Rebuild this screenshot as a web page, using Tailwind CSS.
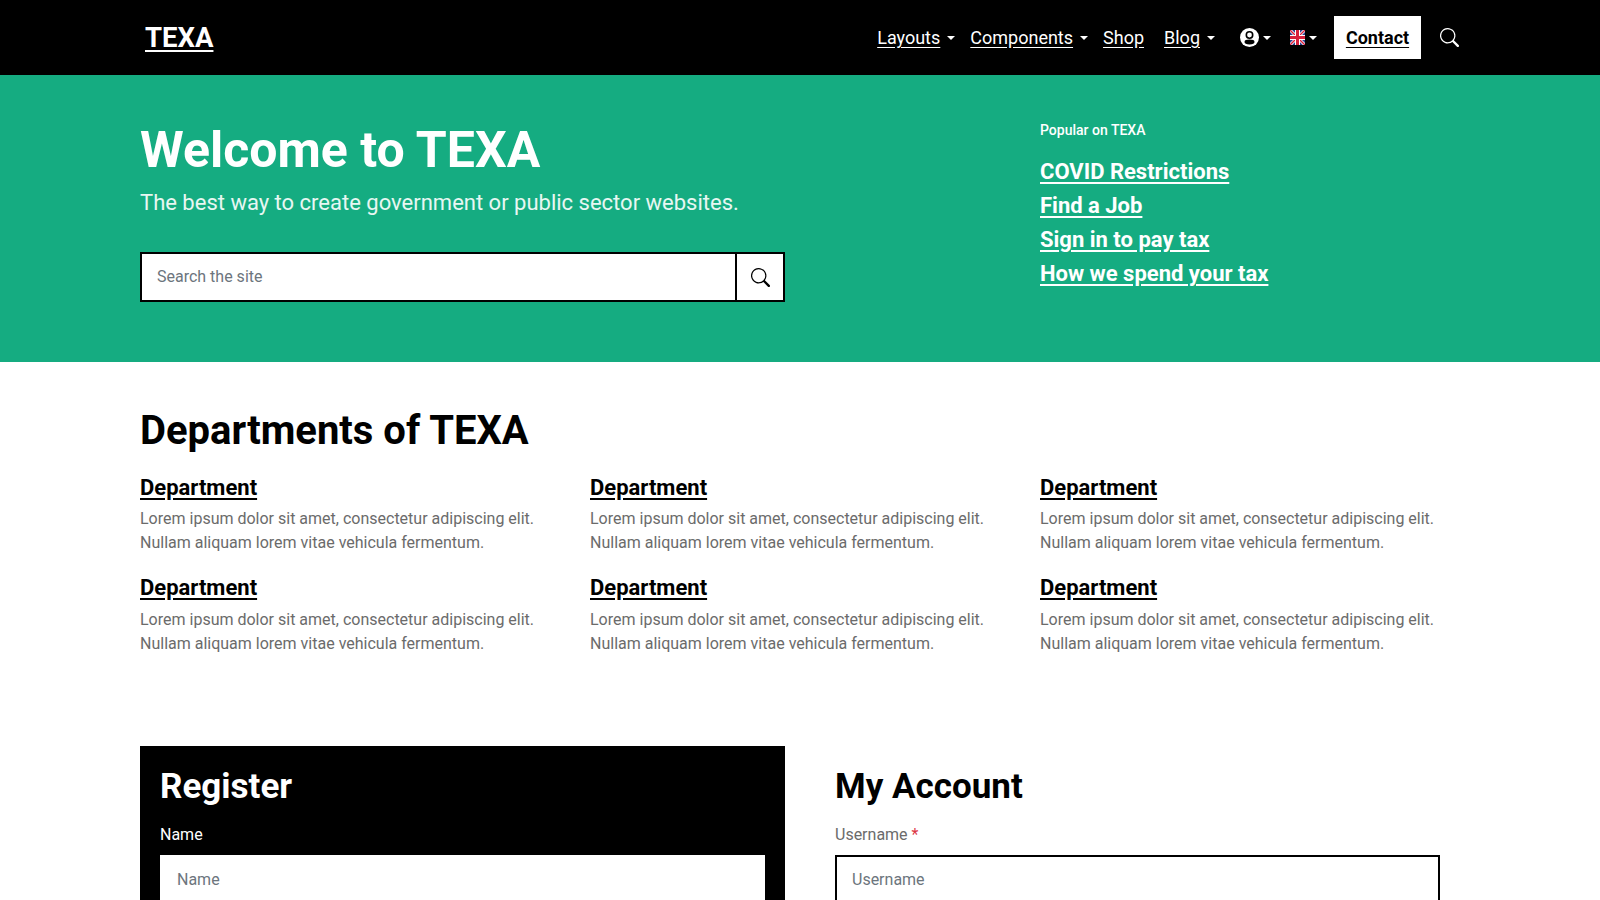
<!doctype html>
<html lang="en">
<head>
<meta charset="utf-8">
<title>TEXA</title>
<script src="https://cdn.jsdelivr.net/npm/@tailwindcss/browser@4"></script>
</head>
<body class="h-[900px] overflow-hidden bg-white font-['Roboto',sans-serif] text-[16px] text-[#6b6b6b]">
<header class="h-[75px] bg-black text-white">
  <div class="ml-[140px] flex h-full w-[1320px] items-center pl-[5px] pr-[1px]">
    <a href="#" class="text-[27.5px] font-bold underline underline-offset-[3px]">TEXA</a>
    <nav class="ml-auto flex items-center text-[18px]">
      <a href="#" class="underline underline-offset-[3px]">Layouts</a>
      <span class="ml-[7px] h-0 w-0 border-x-[4px] border-t-[4px] border-x-transparent border-t-white"></span>
      <a href="#" class="ml-[15px] underline underline-offset-[3px]">Components</a>
      <span class="ml-[7px] h-0 w-0 border-x-[4px] border-t-[4px] border-x-transparent border-t-white"></span>
      <a href="#" class="ml-[15px] underline underline-offset-[3px]">Shop</a>
      <a href="#" class="ml-[20px] underline underline-offset-[3px]">Blog</a>
      <span class="ml-[7px] h-0 w-0 border-x-[4px] border-t-[4px] border-x-transparent border-t-white"></span>
      <svg class="ml-[25px]" width="19" height="19" viewBox="0 0 19 19"><circle cx="9.5" cy="9.5" r="9.5" fill="#fff"/><circle cx="9.5" cy="7" r="3.2" fill="#fff" stroke="#000" stroke-width="1.6"/><ellipse cx="9.5" cy="14" rx="5" ry="2.4" fill="#000"/></svg>
      <span class="ml-[4px] h-0 w-0 border-x-[4px] border-t-[4px] border-x-transparent border-t-white"></span>
      <svg class="ml-[19px]" width="15" height="15" viewBox="0 0 15 15"><rect width="15" height="15" fill="#2a3f8f"/><path d="M0 0L15 15M15 0L0 15" stroke="#fff" stroke-width="3"/><path d="M0 0L15 15M15 0L0 15" stroke="#d8203c" stroke-width="1.4"/><path d="M7.5 0V15M0 7.5H15" stroke="#fff" stroke-width="5"/><path d="M7.5 0V15M0 7.5H15" stroke="#d8203c" stroke-width="3"/></svg>
      <span class="ml-[4px] h-0 w-0 border-x-[4px] border-t-[4px] border-x-transparent border-t-white"></span>
      <a href="#" class="ml-[17px] flex h-[43px] w-[87px] items-center justify-center bg-white font-bold text-black underline underline-offset-[3px]">Contact</a>
      <svg class="ml-[19px]" width="19" height="19" viewBox="0 0 16 16" fill="#fff"><path d="M11.742 10.344a6.5 6.5 0 1 0-1.397 1.398h-.001c.03.04.062.078.098.115l3.85 3.85a1 1 0 0 0 1.415-1.414l-3.85-3.85a1.007 1.007 0 0 0-.115-.1zM12 6.5a5.5 5.5 0 1 1-11 0 5.5 5.5 0 0 1 11 0z"/></svg>
    </nav>
  </div>
</header>

<section class="h-[287px] bg-[#15ac81] text-white">
  <div class="ml-[140px] flex w-[1300px] pt-[45px]">
    <div class="w-[900px]">
      <h1 class="text-[50px] font-bold leading-[60px]">Welcome to TEXA</h1>
      <p class="mt-[6px] text-[22px] leading-[33px] text-white/90">The best way to create government or public sector websites.</p>
      <div class="mt-[33px] flex h-[50px] w-[645px] border-2 border-black bg-white">
        <div class="flex flex-1 items-center pl-[15px] text-[#6c757d]">Search the site</div>
        <div class="flex w-[48px] items-center justify-center border-l-2 border-black">
          <svg width="19" height="19" viewBox="0 0 16 16" fill="#000"><path d="M11.742 10.344a6.5 6.5 0 1 0-1.397 1.398h-.001c.03.04.062.078.098.115l3.85 3.85a1 1 0 0 0 1.415-1.414l-3.85-3.85a1.007 1.007 0 0 0-.115-.1zM12 6.5a5.5 5.5 0 1 1-11 0 5.5 5.5 0 0 1 11 0z"/></svg>
        </div>
      </div>
    </div>
    <div class="w-[400px]">
      <p class="text-[14px] font-medium leading-[21px]">Popular on TEXA</p>
      <ul class="mt-[14px] text-[22px] font-bold leading-[34px]">
        <li><a href="#" class="underline underline-offset-[3px]">COVID Restrictions</a></li>
        <li><a href="#" class="underline underline-offset-[3px]">Find a Job</a></li>
        <li><a href="#" class="underline underline-offset-[3px]">Sign in to pay tax</a></li>
        <li><a href="#" class="underline underline-offset-[3px]">How we spend your tax</a></li>
      </ul>
    </div>
  </div>
</section>

<main class="ml-[140px] w-[1300px]">
  <h2 class="mt-[45px] text-[40px] font-bold leading-[48px] text-black">Departments of TEXA</h2>
  <div class="mt-[20px] grid grid-cols-[450px_450px_400px] gap-y-[20px]">
    <article>
      <h3 class="text-[22px] font-bold leading-[26px] text-black"><a href="#" class="underline underline-offset-[3px]">Department</a></h3>
      <p class="mt-[6px] w-[400px] leading-[24px]">Lorem ipsum dolor sit amet, consectetur adipiscing elit. Nullam aliquam lorem vitae vehicula fermentum.</p>
    </article>
    <article>
      <h3 class="text-[22px] font-bold leading-[26px] text-black"><a href="#" class="underline underline-offset-[3px]">Department</a></h3>
      <p class="mt-[6px] w-[400px] leading-[24px]">Lorem ipsum dolor sit amet, consectetur adipiscing elit. Nullam aliquam lorem vitae vehicula fermentum.</p>
    </article>
    <article>
      <h3 class="text-[22px] font-bold leading-[26px] text-black"><a href="#" class="underline underline-offset-[3px]">Department</a></h3>
      <p class="mt-[6px] w-[400px] leading-[24px]">Lorem ipsum dolor sit amet, consectetur adipiscing elit. Nullam aliquam lorem vitae vehicula fermentum.</p>
    </article>
    <article>
      <h3 class="text-[22px] font-bold leading-[26px] text-black"><a href="#" class="underline underline-offset-[3px]">Department</a></h3>
      <p class="mt-[7px] w-[400px] leading-[24px]">Lorem ipsum dolor sit amet, consectetur adipiscing elit. Nullam aliquam lorem vitae vehicula fermentum.</p>
    </article>
    <article>
      <h3 class="text-[22px] font-bold leading-[26px] text-black"><a href="#" class="underline underline-offset-[3px]">Department</a></h3>
      <p class="mt-[7px] w-[400px] leading-[24px]">Lorem ipsum dolor sit amet, consectetur adipiscing elit. Nullam aliquam lorem vitae vehicula fermentum.</p>
    </article>
    <article>
      <h3 class="text-[22px] font-bold leading-[26px] text-black"><a href="#" class="underline underline-offset-[3px]">Department</a></h3>
      <p class="mt-[7px] w-[400px] leading-[24px]">Lorem ipsum dolor sit amet, consectetur adipiscing elit. Nullam aliquam lorem vitae vehicula fermentum.</p>
    </article>
  </div>
  <div class="mt-[90px] flex gap-[50px]">
    <div class="w-[645px] bg-black px-[20px] pt-[20px] text-white">
      <h2 class="text-[35px] font-bold leading-[42px]">Register</h2>
      <label class="mt-[15px] block leading-[24px]">Name</label>
      <div class="mt-[8px] flex h-[50px] items-center bg-white pl-[17px] text-[#6c757d]">Name</div>
    </div>
    <div class="w-[605px] pt-[20px]">
      <h2 class="text-[35px] font-bold leading-[42px] text-black">My Account</h2>
      <label class="mt-[15px] block leading-[24px]">Username <span class="text-[#dc3545]">*</span></label>
      <div class="mt-[8px] flex h-[50px] items-center border-2 border-black bg-white pl-[15px] text-[#6c757d]">Username</div>
    </div>
  </div>
</main>
</body>
</html>
